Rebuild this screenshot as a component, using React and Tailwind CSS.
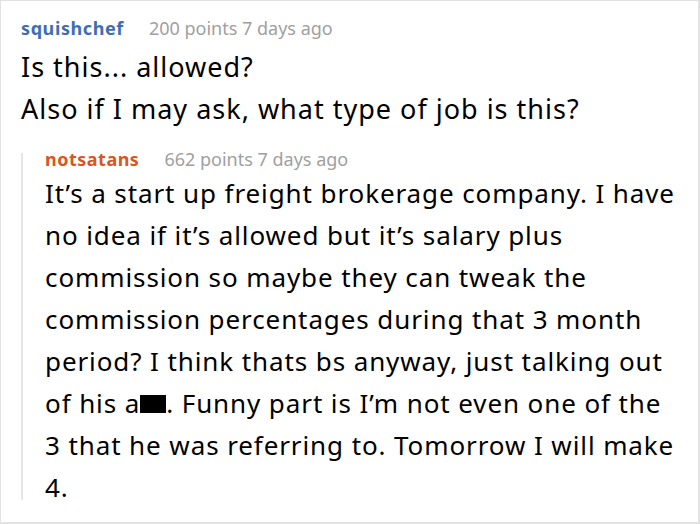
import React from 'react';

const font = { fontFamily: '"Noto Sans", "Open Sans", sans-serif' };

const App = () => {
  return (
    <div className="w-[700px] h-[524px] bg-white border-t border-l border-r-2 border-b-2 border-[#e2e2e2] text-black" style={font}>
      <div className="pl-[20px] pt-[15px]">
        <div className="flex items-baseline gap-[25px] text-[18px] leading-[25px]">
          <span className="font-bold tracking-[0.6px] text-[#3d6db5]">squishchef</span>
          <span className="text-[#a0a0a0]">200 points 7 days ago</span>
        </div>
        <div className="text-[27px] leading-[42px] tracking-[1px] mt-[5px]">
          <p>Is this... allowed?</p>
          <p>Also if I may ask, what type of job is this?</p>
        </div>
      </div>

      <div className="ml-[20px] mt-[17px] flex">
        <div className="w-[2px] mt-[6px] mb-[8px] bg-[#e6e6e6] shrink-0"></div>
        <div className="pl-[22px] pr-[18px]">
          <div className="flex items-baseline gap-[25px] text-[18px] leading-[25px]">
            <span className="font-bold tracking-[0.5px] text-[#d9561e]">notsatans</span>
            <span className="text-[#a0a0a0]">662 points 7 days ago</span>
          </div>
          <p className="text-[26px] leading-[42px] tracking-[0.9px]">
            It’s a start up freight brokerage company. I have no idea if it’s allowed but it’s salary plus commission so maybe they can tweak the commission percentages during that 3 month period? I think thats bs anyway, just talking out of his a
            <span className="inline-block w-[26px] h-[18px] bg-black align-baseline"></span>
            . Funny part is I’m not even one of the 3 that he was referring to. Tomorrow I will make 4.
          </p>
        </div>
      </div>
    </div>
  );
};

export default App;
